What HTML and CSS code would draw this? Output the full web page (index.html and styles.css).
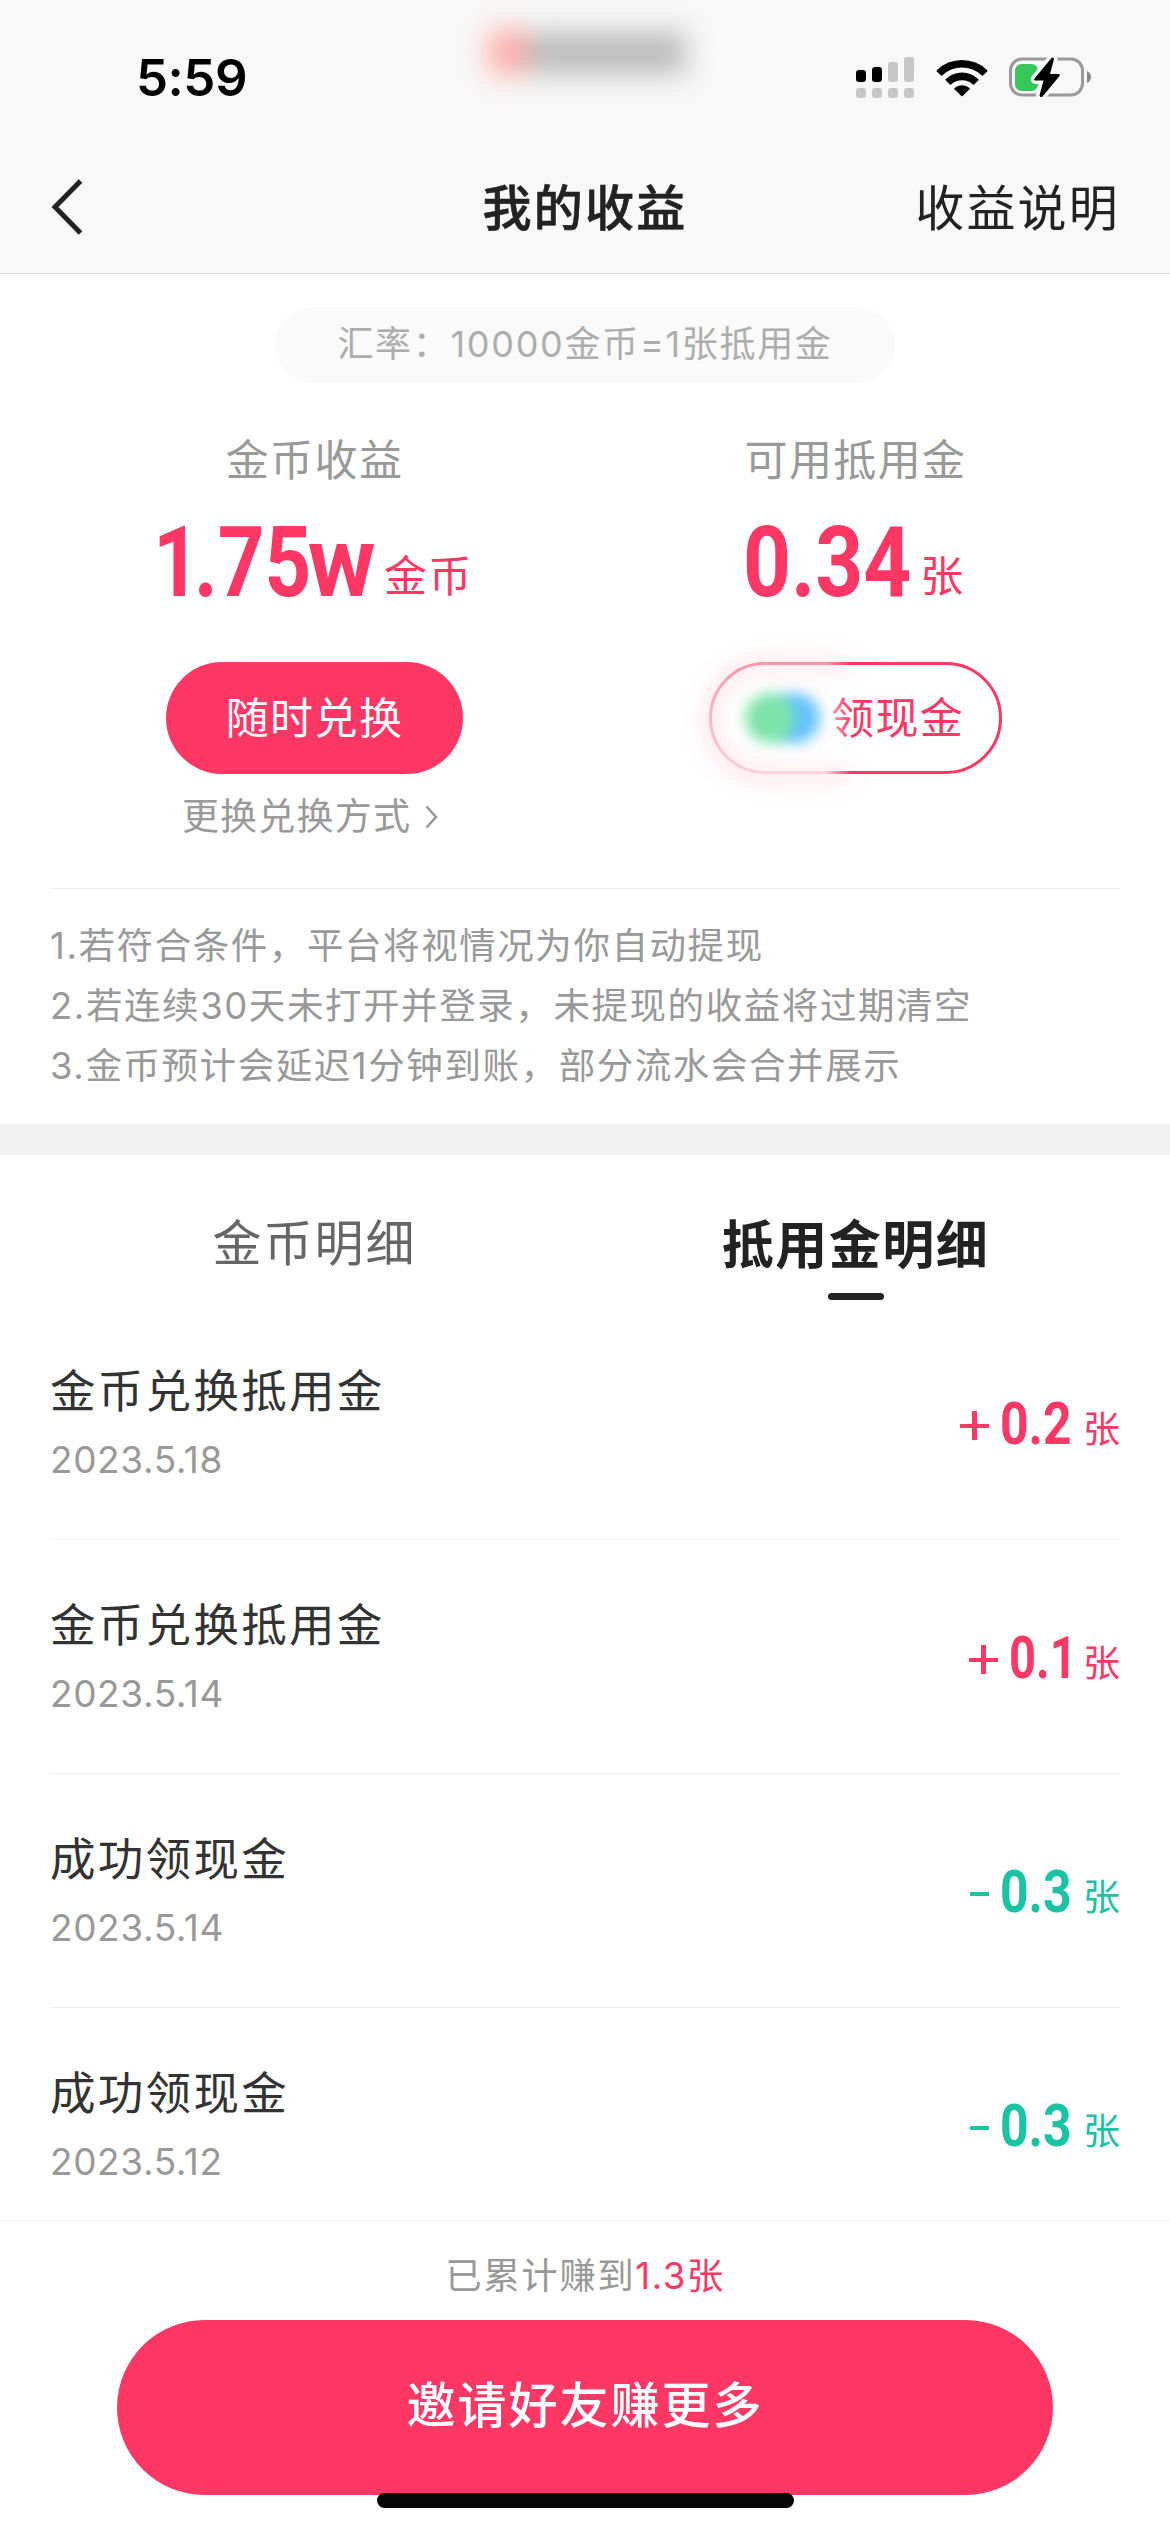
FILE: index.html
```html
<!DOCTYPE html>
<html lang="zh-CN">
<head>
<meta charset="utf-8">
<title>我的收益</title>
<link rel="stylesheet" href="styles.css">
</head>
<body>
<div class="screen">
  <header class="header">
    <div class="status">
      <span class="time">5:59</span>
      <span class="island"><i class="island-dot"></i><i class="island-bar"></i></span>
      <div class="status-icons">
        <svg class="signal" width="58" height="42" viewBox="0 0 58 42">
          <g fill="#000"><rect x="0" y="13" width="10" height="12" rx="3.2"/><rect x="16" y="10" width="10" height="15" rx="3.2"/></g>
          <g fill="#c6c6c6"><rect x="32" y="5" width="10" height="20" rx="3.2"/><rect x="48" y="0" width="10" height="25" rx="3.2"/>
          <rect x="0" y="31" width="10" height="10" rx="3.2"/><rect x="16" y="31" width="10" height="10" rx="3.2"/><rect x="32" y="31" width="10" height="10" rx="3.2"/><rect x="48" y="31" width="10" height="10" rx="3.2"/></g>
        </svg>
        <svg class="wifi" width="52" height="38" viewBox="0 0 52 38">
          <path d="M0.8 11.2A36 36 0 0 1 51.2 11.2Q51.7 11.8 51.2 12.4L47 16.5Q46.4 17 45.8 16.5A28.600 28.600 0 0 0 6.200 16.500Q5.600 17 5 16.500L0.800 12.400Q0.300 11.800 0.800 11.200Z"/>
          <path d="M9.600 20.200A23.600 23.600 0 0 1 42.400 20.200Q42.900 20.800 42.400 21.300L38.100 25.500Q37.500 26 36.900 25.500A16.200 16.200 0 0 0 15.100 25.500Q14.500 26 13.900 25.500L9.600 21.300Q9.100 20.800 9.600 20.200Z"/>
          <path d="M18.500 29A11.500 11.500 0 0 1 33.500 29Q34 29.600 33.500 30.200L26.600 37Q26 37.500 25.400 37L18.500 30.200Q18 29.600 18.500 29Z"/>
        </svg>
        <svg class="battery" width="84" height="44" viewBox="0 0 84 44">
          <rect x="1.500" y="4" width="72" height="36" rx="11.500" fill="none" stroke="#999" stroke-width="3"/>
          <path d="M78 16Q82 18 82 22T78 28Z" fill="#888"/>
          <rect x="6" y="9" width="23" height="27" rx="6.500" fill="#34c759"/>
          <path d="M42.500 3L25.500 23.500Q24.500 25.500 26.500 25.500H34.500L30.500 40.500Q31.500 43 33.500 41.500L50.500 21Q51.500 19 49.500 19H41L45 4Q44.500 1.500 42.500 3Z" fill="#000" stroke="#f8f8f8" stroke-width="7" stroke-linejoin="round" paint-order="stroke"/>
        </svg>
      </div>
    </div>
    <nav class="nav">
      <svg class="back" width="34" height="60" viewBox="0 0 34 60"><path d="M30.500 4L5 30L30.500 56" fill="none" stroke="#222" stroke-width="5"/></svg>
      <h1 class="nav-title">我的收益</h1>
      <a class="nav-link">收益说明</a>
    </nav>
  </header>

  <section class="summary">
    <div class="rate">汇率：10000金币=1张抵用金</div>
    <div class="balances">
      <div class="balance">
        <div class="label">金币收益</div>
        <div class="figure">
          <span class="num num-coins"><b><i class="one">1</i>.75<i class="w">w</i></b></span>
          <span class="unit">金币</span>
        </div>
        <div class="btn btn-solid">随时兑换</div>
        <div class="switch">更换兑换方式<svg width="13" height="24" viewBox="0 0 13 24"><path d="M1.500 1.500L11 12L1.500 22.500" fill="none" stroke="#999" stroke-width="2.600"/></svg></div>
      </div>
      <div class="balance">
        <div class="label">可用抵用金</div>
        <div class="figure">
          <span class="num num-cash"><b>0.34</b></span>
          <span class="unit">张</span>
        </div>
        <div class="btn btn-line">
          <span class="cash">领现金</span>
          <i class="veil"></i><i class="glow"></i><i class="dot dot-blue"></i><i class="dot dot-green"></i>
        </div>
      </div>
    </div>
    <div class="notes">
      <p>1.若符合条件，平台将视情况为你自动提现</p>
      <p>2.若连续30天未打开并登录，未提现的收益将过期清空</p>
      <p>3.金币预计会延迟1分钟到账，部分流水会合并展示</p>
    </div>
  </section>

  <section class="details">
    <div class="tabs">
      <div class="tab">金币明细</div>
      <div class="tab tab-active">抵用金明细</div>
    </div>
    <ul class="list">
      <li class="row">
        <div><div class="row-title">金币兑换抵用金</div><div class="date">2023.5.18</div></div>
        <div class="amount plus"><i class="sign"></i><span class="num num-row"><b>0.2</b></span><span class="amount-unit">张</span></div>
      </li>
      <li class="row">
        <div><div class="row-title">金币兑换抵用金</div><div class="date">2023.5.14</div></div>
        <div class="amount plus"><i class="sign"></i><span class="num num-row num-slim"><b>0.1</b></span><span class="amount-unit">张</span></div>
      </li>
      <li class="row">
        <div><div class="row-title">成功领现金</div><div class="date">2023.5.14</div></div>
        <div class="amount minus"><i class="sign"></i><span class="num num-row"><b>0.3</b></span><span class="amount-unit">张</span></div>
      </li>
      <li class="row">
        <div><div class="row-title">成功领现金</div><div class="date">2023.5.12</div></div>
        <div class="amount minus"><i class="sign"></i><span class="num num-row"><b>0.3</b></span><span class="amount-unit">张</span></div>
      </li>
    </ul>
  </section>

  <footer class="footer">
    <div class="total">已累计赚到<b>1.3张</b></div>
    <div class="invite">邀请好友赚更多</div>
    <i class="home"></i>
  </footer>
</div>
</body>
</html>
```
FILE: styles.css
```css
* { box-sizing: border-box; margin: 0; padding: 0; }
body { background: #fff; }
.screen {
  width: 1170px; height: 2532px; overflow: hidden;
  display: flex; flex-direction: column;
  background: #fff; color: #222;
  font-family: Inter, "Noto Sans CJK SC", sans-serif;
}
svg { display: block; flex: none; }

/* header */
.header { height: 274px; flex: none; background: #f8f8f8; border-bottom: 1px solid #dedede; }
.status { position: relative; height: 140px; padding: 0 77px 0 136px; display: flex; justify-content: space-between; }
.time { margin-top: 48px; font-size: 51px; line-height: 60px; font-weight: 600; letter-spacing: -0.5px; color: #000; }
.island { position: absolute; left: 478px; top: 20px; width: 220px; height: 64px; filter: blur(14px); }
.island-dot { position: absolute; left: 10px; top: 9px; width: 40px; height: 46px; background: #fcaca6; border-radius: 10px; }
.island-bar { position: absolute; left: 50px; top: 12px; width: 158px; height: 42px; background: #bababa; }
.status-icons { display: flex; align-items: flex-start; }
.signal { margin-top: 57px; }
.wifi { margin: 59px 0 0 22px; }
.battery { margin: 55px 0 0 21px; }
.nav { height: 133px; padding: 4px 50px 0 50px; display: grid; grid-template-columns: 1fr auto 1fr; align-items: center; }
.back { margin-top: -4px; }
.nav-title { font-size: 49px; line-height: 60px; font-weight: 500; letter-spacing: 2.300px; -webkit-text-stroke: .6px #222; }
.nav-link { justify-self: end; font-size: 49px; line-height: 60px; letter-spacing: 2.200px; }

/* summary */
.summary { height: 850px; flex: none; padding: 33px 50px 0; display: flex; flex-direction: column; }
.rate { align-self: center; width: 620px; height: 76px; border-radius: 38px; background: #fafafa; color: #adadad; font-size: 36px; line-height: 75px; letter-spacing: 1.700px; text-align: center; white-space: nowrap; }
.balances { height: 505px; display: grid; grid-template-columns: 529px 553px; padding-top: 46px; }
.balance { display: flex; flex-direction: column; align-items: center; }
.label { height: 60px; font-size: 43px; line-height: 62px; letter-spacing: 1.400px; color: #999; }
.figure { height: 79px; margin-top: 35px; display: flex; align-items: flex-start; color: #ff3765; }
.num { display: block; flex: none; white-space: nowrap; font-family: Roboto, sans-serif; }
.num b { display: inline-block; font-weight: 700; transform-origin: left top; }
.num i { font-style: normal; }
.num-coins, .num-cash { font-size: 98.500px; line-height: 77px; height: 77px; }
.num-coins { width: 218px; }
.num-coins b { margin-left: -3px; transform: scaleX(.828); }
.one { letter-spacing: -7px; }
.w { display: inline-block; margin-left: -4px; transform: scaleX(1.13); transform-origin: left top; }
.num-cash { width: 164px; }
.num-cash b { margin-left: -3px; transform: scaleX(.85); }
.unit { margin: 22px 0 0 10px; font-size: 43px; line-height: 60px; letter-spacing: 1.400px; }
.btn { margin-top: 59px; height: 112px; border-radius: 56px; font-size: 43px; line-height: 108px; letter-spacing: 1.400px; }
.btn-solid { width: 297px; background: #ff3765; color: #fff; text-align: center; line-height: 112px; }
.btn-line { position: relative; width: 293px; border: 3px solid #ff3765; color: #ff3765; padding-left: 119px; line-height: 106px; }
.veil { position: absolute; left: -8px; top: -6px; width: 148px; height: 118px; background: linear-gradient(180deg, rgba(255,255,255,.5), rgba(255,255,255,.85)); -webkit-mask-image: linear-gradient(90deg, #000 82%, transparent); mask-image: linear-gradient(90deg, #000 82%, transparent); }
.glow { position: absolute; left: -7px; top: -5px; width: 145px; height: 120px; border: 9px solid rgba(255,55,101,.22); border-right: 0; border-radius: 60px 0 0 60px; filter: blur(11px); }
.dot { position: absolute; top: 28px; width: 50px; height: 50px; border-radius: 50%; filter: blur(7px); }
.dot-green { left: 33px; background: #7ce4a8; }
.dot-blue { left: 58px; background: #64c0ff; }
.switch { margin-top: 13px; display: flex; align-items: center; gap: 14px; font-size: 37px; line-height: 60px; letter-spacing: 1.200px; color: #999; padding-right: 9px; }
.notes { border-top: 1px solid #f2f2f2; padding-top: 27px; font-size: 36.500px; line-height: 60px; letter-spacing: 1.570px; color: #999; white-space: nowrap; }

/* details */
.details { height: 1096px; flex: none; border-top: 31px solid #f2f2f2; overflow: hidden; }
.tabs { height: 150px; padding: 0 38px 0 50px; display: grid; grid-template-columns: 529px 553px; text-align: center; }
.tab { padding-top: 59px; font-size: 49px; line-height: 60px; letter-spacing: 2px; color: #666; }
.tab-active { position: relative; padding-top: 61px; font-size: 52px; font-weight: 700; letter-spacing: 1.500px; color: #222; }
.tab-active::after { content: ""; position: absolute; left: 249px; top: 138px; width: 56px; height: 7px; border-radius: 3.500px; background: #222; }
.list { list-style: none; padding: 0 50px; }
.row { height: 234px; border-bottom: 1px solid #f2f2f2; display: flex; justify-content: space-between; padding-top: 56px; }
.row:first-child { height: 235px; padding-top: 57px; }
.row-title { font-size: 45.500px; line-height: 60px; letter-spacing: 2.300px; color: #333; }
.date { margin-top: 10px; font-size: 37px; line-height: 56px; letter-spacing: .6px; color: #999; }
.amount { height: 46px; margin: 38px 0 0; display: flex; align-items: flex-start; }
.plus { color: #ff3765; }
.minus { color: #19c3a3; }
.sign { width: 29px; height: 29px; margin: 11px 13px 0 0; background: linear-gradient(currentColor, currentColor) center / 29px 4px no-repeat, linear-gradient(currentColor, currentColor) center / 5px 29px no-repeat; }
.minus .sign { width: 19px; background: linear-gradient(currentColor, currentColor) center / 19px 4px no-repeat; }
.num-row { width: 69px; height: 48px; font-size: 60px; line-height: 48px; }
.num-row b { margin-left: -2px; transform: scaleX(.83); }
.num-slim { width: 60px; }
.num-slim b { transform: scaleX(.785); }
.amount-unit { margin-left: 12px; font-size: 37px; line-height: 60px; }

/* footer */
.footer { position: relative; flex: 1; background: #fff; border-top: 1px solid #f2f2f2; display: flex; flex-direction: column; align-items: center; padding-top: 25px; }
.total { font-size: 36.500px; line-height: 60px; letter-spacing: 1.500px; color: #999; }
.total b { font-weight: 400; color: #ff3765; }
.invite { margin-top: 14px; width: 936px; height: 175px; border-radius: 87.500px; background: #ff3765; color: #fff; font-size: 49px; font-weight: 500; line-height: 172px; letter-spacing: 2px; text-align: center; }
.home { position: absolute; left: 377px; bottom: 24px; width: 417px; height: 15px; border-radius: 7.500px; background: #050505; }
```
